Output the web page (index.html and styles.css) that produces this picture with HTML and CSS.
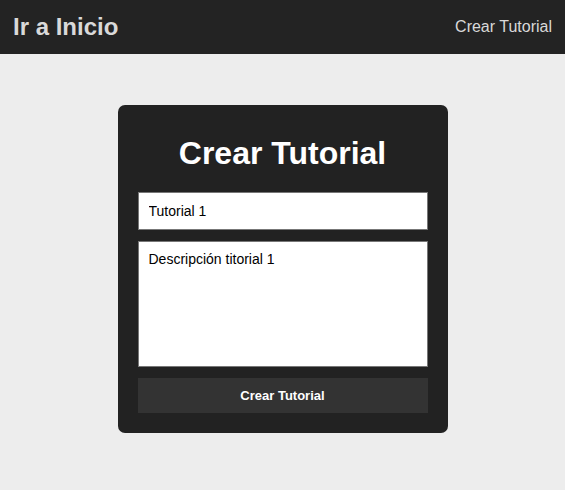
FILE: index.html
```html
<!DOCTYPE html>
<html lang="es">
<head>
<meta charset="utf-8">
<title>Crear Tutorial</title>
<link rel="stylesheet" href="styles.css">
</head>
<body>
<header class="navbar">
  <a class="brand" href="#">Ir a Inicio</a>
  <a class="nav-link" href="#">Crear Tutorial</a>
</header>
<main class="content">
  <form class="card">
    <h1 class="card-title">Crear Tutorial</h1>
    <input class="field" type="text" value="Tutorial 1">
    <textarea class="field area">Descripción titorial 1</textarea>
    <button class="btn" type="button">Crear Tutorial</button>
  </form>
</main>
</body>
</html>
```

FILE: styles.css
```css
* { box-sizing: border-box; }
html, body { margin: 0; padding: 0; }
body {
  background: #ededed;
  font-family: "Liberation Sans", Arial, sans-serif;
  height: 490px;
}
.navbar {
  height: 54px;
  background: #232323;
  display: flex;
  align-items: center;
  justify-content: space-between;
  padding: 0 13px;
}
.brand {
  color: #d9d9d9;
  font-weight: bold;
  font-size: 24px;
  text-decoration: none;
}
.nav-link {
  color: #d9d9d9;
  font-size: 16px;
  text-decoration: none;
}
.content {
  display: flex;
  justify-content: center;
  padding-top: 51px;
}
.card {
  width: 330px;
  background: #222;
  border-radius: 7px;
  padding: 20px;
  display: flex;
  flex-direction: column;
}
.card-title {
  color: #fff;
  font-size: 32px;
  font-weight: bold;
  text-align: center;
  margin: 10px 0 20px;
  line-height: 37px;
}
.field {
  width: 290px;
  height: 38px;
  border: 1px solid #777;
  background: #fff;
  font-family: "Liberation Sans", Arial, sans-serif;
  font-size: 14px;
  color: #000;
  padding: 0 10px;
  margin: 0 0 11px;
  outline: none;
}
.area {
  height: 126px;
  padding: 9px 10px;
  resize: none;
  display: block;
}
.btn {
  height: 35px;
  background: #333;
  color: #fff;
  border: none;
  font-family: "Liberation Sans", Arial, sans-serif;
  font-weight: bold;
  font-size: 13px;
}
```
